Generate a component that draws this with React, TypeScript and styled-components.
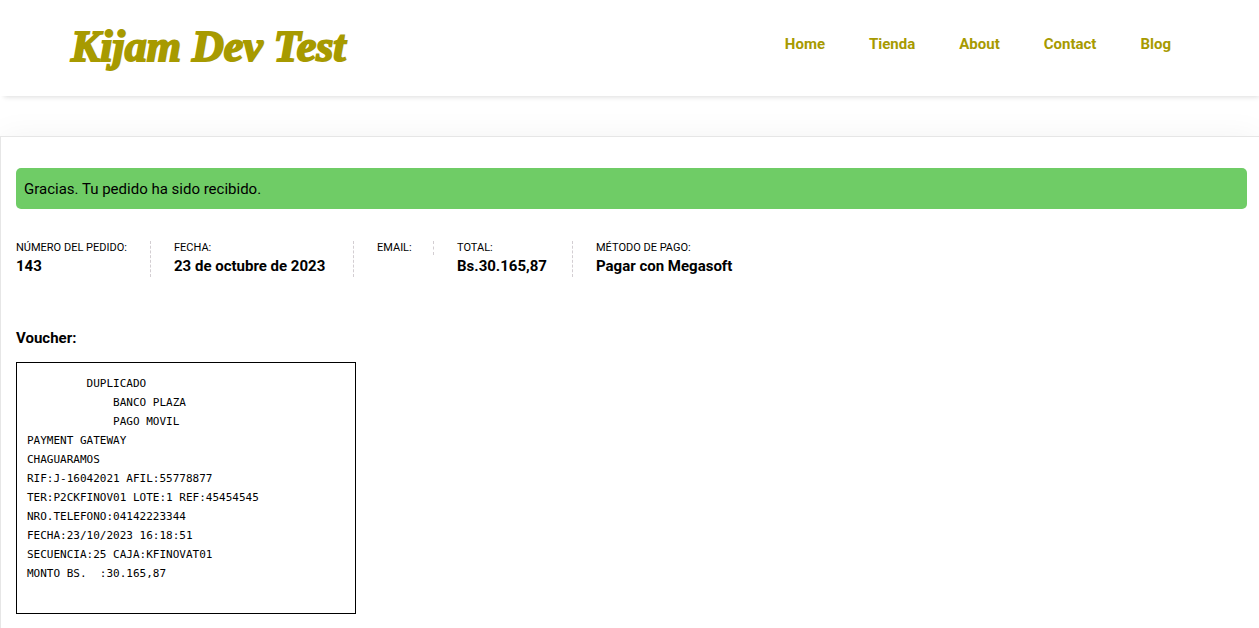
import React from "react";
import styled, { createGlobalStyle } from "styled-components";

const GlobalStyle = createGlobalStyle`
  *, *::before, *::after { box-sizing: border-box; }
  body {
    margin: 0;
    background: #fff;
    color: #000;
    font-family: Roboto, "Open Sans", sans-serif;
    font-size: 15px;
    line-height: 25px;
  }
`;

const Page = styled.div`
  display: flex;
  flex-direction: column;
  min-height: 100vh;
  overflow: hidden;
`;

const Header = styled.header`
  display: flex;
  align-items: center;
  justify-content: space-between;
  flex-wrap: wrap;
  min-height: 96px;
  padding: 0 88px 8px 71px;
  background: #fff;
  box-shadow: 2px 3px 5px -2px rgba(0, 0, 0, 0.14);
`;

const Logo = styled.a`
  padding-top: 6px;
  color: #a79a00;
  font-family: "Liberation Serif", serif;
  font-size: 44px;
  font-style: italic;
  font-weight: 700;
  line-height: 80px;
  text-decoration: none;
  -webkit-text-stroke: 2px #a79a00;
`;

const Nav = styled.nav`
  display: flex;
  flex-wrap: wrap;
  gap: 8px 44px;
`;

const NavLink = styled.a`
  color: #a79a00;
  font-weight: 700;
  text-decoration: none;
`;

const OrderCard = styled.main`
  flex: 1;
  margin-top: 40px;
  padding: 31px 12px 14px 15px;
  border: 1px solid #e6e6e6;
  border-width: 1px 0 0 1px;
  background: #fff;
  box-shadow: 0 0 30px rgba(0, 0, 0, 0.05);
`;

const Notice = styled.p`
  margin: 0 0 32px;
  padding: 9px 8px 7px;
  border-radius: 5px;
  background: #6fcc66;
`;

const Overview = styled.ul`
  display: grid;
  grid-template-columns: 158px 203px 80px 139px auto;
  align-items: start;
  margin: 0 0 49px;
  padding: 0;
  list-style: none;
`;

const OverviewItem = styled.li`
  margin-right: 23px;
  border-right: 1px dashed #d3ced2;
  font-size: 11px;
  line-height: 14px;
  text-transform: uppercase;

  &:last-child {
    border-right: 0;
  }
`;

const OverviewValue = styled.strong`
  display: block;
  font-size: 15px;
  line-height: 22px;
  text-transform: none;
`;

const VoucherTitle = styled.h2`
  margin: 0 0 11px;
  font-size: 15px;
  line-height: 25px;
`;

const Voucher = styled.pre`
  max-width: 340px;
  min-height: 252px;
  margin: 0;
  padding: 11px 10px;
  border: 1px solid #000;
  font-family: "DejaVu Sans Mono", "Liberation Mono", monospace;
  font-size: 11px;
  line-height: 19px;
`;

const navItems = ["Home", "Tienda", "About", "Contact", "Blog"];

const overview = [
  { label: "Número del pedido:", value: "143" },
  { label: "Fecha:", value: "23 de octubre de 2023" },
  { label: "Email:", value: "" },
  { label: "Total:", value: "Bs.30.165,87" },
  { label: "Método de pago:", value: "Pagar con Megasoft" },
];

const voucherLines = [
  "         DUPLICADO",
  "             BANCO PLAZA",
  "             PAGO MOVIL",
  "PAYMENT GATEWAY",
  "CHAGUARAMOS",
  "RIF:J-16042021 AFIL:55778877",
  "TER:P2CKFINOV01 LOTE:1 REF:45454545",
  "NRO.TELEFONO:04142223344",
  "FECHA:23/10/2023 16:18:51",
  "SECUENCIA:25 CAJA:KFINOVAT01",
  "MONTO BS.  :30.165,87",
];

export default function App() {
  return (
    <Page lang="es">
      <GlobalStyle />
      <Header>
        <Logo href="#">Kijam Dev Test</Logo>
        <Nav>
          {navItems.map((item) => (
            <NavLink key={item} href="#">{item}</NavLink>
          ))}
        </Nav>
      </Header>
      <OrderCard>
        <Notice>Gracias. Tu pedido ha sido recibido.</Notice>
        <Overview>
          {overview.map(({ label, value }) => (
            <OverviewItem key={label}>
              {label}
              {value && <OverviewValue>{value}</OverviewValue>}
            </OverviewItem>
          ))}
        </Overview>
        <VoucherTitle>Voucher:</VoucherTitle>
        <Voucher>{voucherLines.join("\n")}</Voucher>
      </OrderCard>
    </Page>
  );
}
